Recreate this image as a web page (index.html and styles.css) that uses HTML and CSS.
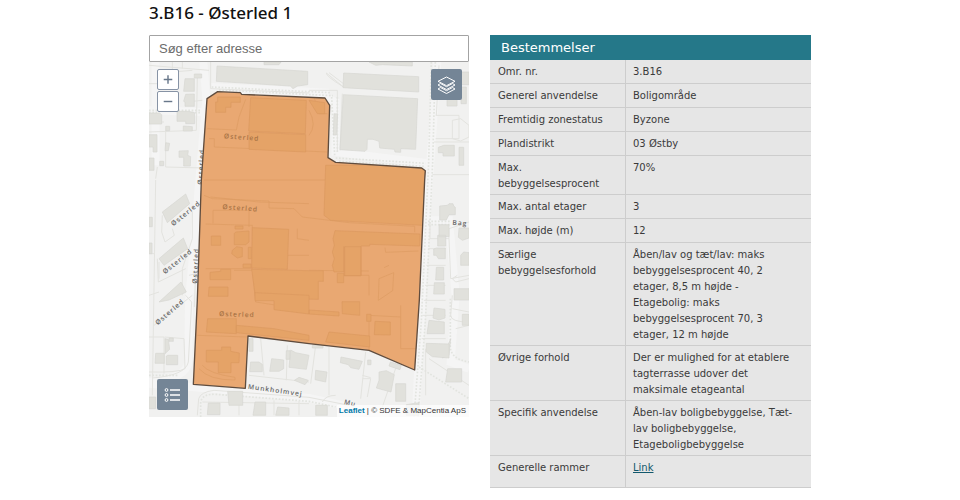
FILE: index.html
```html
<!DOCTYPE html>
<html lang="da">
<head>
<meta charset="utf-8">
<meta name="viewport" content="width=device-width, initial-scale=1">
<title>3.B16 - Østerled 1</title>
<link rel="stylesheet" href="styles.css">
</head>
<body>
<main class="page">
  <h1 class="title">3.B16 - Østerled 1</h1>
  <div class="columns">
    <section class="map-column">
      <input class="search" type="search" placeholder="Søg efter adresse" aria-label="Søg efter adresse">
      <div class="map">
        <svg class="map-canvas" viewBox="0 0 960 1065" role="img" aria-label="Kort over Østerled">
          <defs>
            <clipPath id="area"><path d="M174 110L206 89L274 92L278 97L528 108L542 130L537 287L560 301L818 318L829 326L827 354L811 714L797 924L660 865L480 845L297 822L289 979L133 967L145 714L157 354Z"/></clipPath>
          </defs>
          <rect width="960" height="1065" fill="#f1f1f0"/>

          <!-- roads -->
          <g class="road">
            <path d="M163 0L172 110L120 720L118 900Q112 950 0 960"/>
            <path d="M0 965L130 975L480 1008L720 1060"/>
            <path d="M480 90L560 120L560 270L850 305M865 0L830 500L800 1065"/>
            <path d="M185 75L540 92"/>
            <path d="M20 0L20 310M0 145L160 150M835 475H900L920 700L905 900L960 920"/>
          </g>

          <!-- hedges and tree rows -->
          <g class="trees">
            <path d="M188 75L544 92M210 84L552 101M548 105L557 280M565 105V270M560 288L830 304M570 298L828 313"/>
            <path d="M847 0L839 300L817 780L795 1065M859 0L851 300L829 780L807 1065"/>
            <path d="M0 145H24M88 145H158M0 152H24M88 152H158M837 478H905M837 488H905M0 940H90"/>
            <path d="M155 1065V1020Q160 995 200 997L480 1018L560 1035M810 915L960 1010M904 710V850Q902 890 960 900"/>
          </g>

          <!-- plot boundaries -->
          <g class="plot">
            <path d="M0 10L180 25M70 0V30L130 25M0 65H24M185 0V80L480 93M145 45L142 205L0 210M50 205V315L165 318M25 315L20 350M100 0V20M0 180H45M110 120L160 115"/>
            <path d="M532 33L582 74M540 32L590 70M532 33Q530 42 582 74M480 85H565V270M580 95L573 265M860 160H930V230H860M910 175L935 170L960 190V225L935 237L910 230ZM855 240H960M850 338H960M870 10L862 160"/>
            <path d="M40 460L38 510L48 540L76 520L70 500M25 590L28 660L110 620M30 600V650M20 354L10 1000M130 450V530L100 620V700M0 575H18M0 700L30 690M15 790L130 700M120 640L140 635L136 735"/>
            <path d="M843 480V530H900V500L960 480M838 560H890M832 610H890M828 670H890M900 530L905 650L960 640M925 640L910 650L920 660L960 650M825 715H890M820 760H890M818 830H890M950 30Q950 40 960 42"/>
            <path d="M0 825H45V935M47 825L105 830L108 920Q90 932 0 930M110 700L128 720L118 900Q110 940 10 948"/>
            <path d="M300 940L480 960M335 830L345 940M415 850L412 955M500 850L485 965M540 855V1000M650 870L635 1010M640 950H665L655 1005M750 890L700 1035M640 940L665 947M840 890L960 970M910 740L960 750M920 800L960 790M830 860V1000M910 700L905 760Q905 780 960 780"/>
            <path d="M145 1060L149 1010Q155 990 195 985L480 1006L600 1030M160 1020L480 1025M270 1010V1060M375 1015V1060M450 1018V1060M560 1000Q530 1000 520 1020"/>
          </g>

          <!-- buildings -->
          <g class="building">
            <path d="M204 12L476 28V68L446 72L432 80L424 72L202 58ZM345 0H396L390 8H345ZM660 0L680 10L700 8L790 12V0ZM584 33L809 44V90L582 77ZM583 98L806 110L800 262L755 260V271L738 270L736 262L692 258L690 238L672 232H655L654 262L648 268L573 263Z"/>
            <path d="M108 50H136V88H104ZM136 36H158V48H136ZM110 97L136 96V133H108V120L104 118ZM0 153H32L38 158V186H0ZM84 148H118L137 152V185H110V178H84ZM50 193H62V206H50ZM103 192L130 194V207H103ZM0 218H24V270H12V255H0ZM50 242L62 244L58 266H48ZM90 267L118 266L116 280L125 284L124 312H104V286H90ZM32 298H44V311H32ZM0 288H15V325H0Z"/>
            <path d="M894 98H924V132H894ZM868 256L884 250H916V282H882V272H868ZM930 256H944V310H930ZM555 155L566 156L562 219H553ZM930 30H960V68H930ZM936 75H952V125H936Z"/>
            <path d="M40 450L110 396L122 425L55 482ZM30 590L103 528L116 560L45 610ZM30 720L96 660L112 690L60 714ZM0 466H10V494H0ZM0 543H9V575H0Z"/>
            <path d="M872 432L895 430L900 425H912L914 432L919 436V458H900L892 474H872ZM870 488H900V524H870ZM866 520H890V552H866ZM854 561L862 558H889V590H868L862 580H854ZM862 616H884V654H860ZM856 662H886V696H854ZM930 498H960V528L940 535L928 526ZM935 580L944 570L960 572V610H935ZM915 680H960V714H915ZM905 830L900 880L880 888ZM940 757H960V790H940Z"/>
            <path d="M20 874H46V904H18ZM56 880H86V908H52V882ZM48 830L58 832L62 862L48 875ZM60 828H73V838H60ZM0 1005H20V1040H0ZM178 1023H213V1058H175ZM236 988H281V1030H240ZM318 1020H350V1060H312ZM386 1035L420 1038V1060H380Z"/>
            <path d="M305 900H330L340 907V929H302ZM368 890L404 894V920L390 928H362ZM412 866H423V892H411ZM425 864L440 872L480 880L472 922L420 916ZM300 830H312V868H300ZM436 955L450 946L478 955L468 968ZM576 885L640 898L630 922L605 917L598 908L574 902ZM500 925L534 930L530 960L498 953ZM690 930L712 926L736 938L726 990L682 978L690 955ZM740 965H770V1018H740ZM724 900L757 910L753 923L720 912ZM656 894H666V908H656ZM855 738L888 742V768L870 774L852 768ZM840 775L886 780V815H834ZM832 844L900 846V888L850 884L832 870ZM490 850H522V858H490ZM896 920H938V960H890ZM772 1028L810 1022V1060H772ZM500 1030H535V1060H500Z"/>
          </g>
          <g class="label">
            <text transform="translate(73 493) rotate(-39)">Østerled</text>
            <text transform="translate(48 637) rotate(-39)">Østerled</text>
            <text transform="translate(26 790) rotate(-41)">Østerled</text>
            <text transform="translate(910 488) rotate(4)">Bag</text>
            <text transform="translate(296 980) rotate(8)">Munkholmvej</text>
            <text transform="translate(584 1026) rotate(13)">Mu</text>
            <text transform="translate(144 665) rotate(-87)">Østerled</text>
            <text transform="translate(160 368) rotate(-87)">Østerled</text>
          </g>

          <!-- selected planning area -->
          <g clip-path="url(#area)">
            <rect width="960" height="1065" fill="#e9a872"/>
            <g class="area-light">
              <path d="M165 354L530 354M175 200L262 204L270 165L290 112M180 230H196V255L535 270M192 484V445H300V495M170 486L310 490V620H170M185 405L330 420L480 425"/>
              <path d="M165 400L190 410L360 417V438L435 440L460 465L600 482L797 493V511M445 500V530L480 535M415 580H480M480 145Q505 190 480 220M495 105L510 155H535M480 625L660 627M585 640H660V700M708 557L710 571L808 567M690 650L734 632L731 686L688 715ZM705 617L720 610"/>
              <path d="M255 625H310L320 720L450 740M160 910Q180 935 258 946V954Q180 955 150 920M145 820L295 825M430 700L445 735L480 735M660 760L755 765M755 730V860H810M660 760V865"/>
            </g>
            <g class="area-building">
              <path d="M305 107L472 115L469 215L299 207ZM206 105H274V121H246V136H230V151H200V120H206ZM300 210L470 218V270L300 262ZM480 115L527 122V155H505Z"/>
              <path d="M530 310H828L822 490L545 475L525 460Z"/>
              <path d="M310 497L419 502L415 622L308 618ZM187 522H215V550H187ZM260 510L300 507V540L290 548H256V515ZM258 492H282V501H258ZM250 565L263 554L280 557V584L265 588L248 575ZM282 606H306V617H282ZM183 631L215 628V622H245V653H183ZM180 675H237V703H178ZM298 556H307V590H298Z"/>
              <path d="M558 506L813 516L812 552L662 547V552H636V641H585V554V629L555 630L550 610L556 590L550 570L556 550L552 530ZM587 554H636V641H587ZM308 622L480 626H523V658H508V712L320 708ZM565 634H584V662H565Z"/>
              <path d="M318 692L480 700V756L375 743V716H318ZM176 770H262V815L172 810ZM172 865H218V855H245V868L271 873L270 902H246V932H208V900H172ZM262 790L375 800L480 820V835L262 812ZM579 719H632V760L580 755ZM480 744L570 750V762L480 756ZM678 778L724 780V819L676 818ZM540 810L662 822V855L530 840ZM653 757H666V778H653Z"/>
            </g>
            <g class="area-label">
              <text transform="translate(224 229) rotate(4)">Østerled</text>
              <text transform="translate(220 441) rotate(4)">Østerled</text>
              <text transform="translate(210 762) rotate(2)">Østerled</text>
            </g>
          </g>
          <path class="outline" d="M174 110L206 89L274 92L278 97L528 108L542 130L537 287L560 301L818 318L829 326L827 354L811 714L797 924L660 865L480 845L297 822L289 979L133 967L145 714L157 354Z"/>
        </svg>
        <div class="zoom">
          <button class="zoom-button" type="button" aria-label="Zoom ind"><svg viewBox="0 0 20 20"><path d="M5.500 10H14.500M10 5.500V14.500"/></svg></button>
          <button class="zoom-button" type="button" aria-label="Zoom ud"><svg viewBox="0 0 20 20"><path d="M5.500 10H14.500"/></svg></button>
        </div>
        <button class="tool tool-layers" type="button" aria-label="Kortlag">
          <svg viewBox="0 0 31 31"><path class="sheet" d="M7 20L15.500 24.500L24 20L21.500 18.500L15.500 21.700L9.500 18.500Z"/><path class="sheet" d="M7 16L15.500 20.500L24 16L21.500 14.500L15.500 17.700L9.500 14.500Z"/><path class="sheet" d="M15.500 8L24 12.300L15.500 16.700L7 12.300Z"/></svg>
        </button>
        <button class="tool tool-legend" type="button" aria-label="Signaturforklaring">
          <svg viewBox="0 0 31 31"><path class="rows" d="M13 11H23M13 16H23M13 21H23"/><g class="dots"><circle cx="9.500" cy="11" r="1.400"/><circle cx="9.500" cy="16" r="1.400"/><circle cx="9.500" cy="21" r="1.400"/></g></svg>
        </button>
        <div class="attribution"><a href="#">Leaflet</a> | © SDFE &amp; MapCentia ApS</div>
      </div>
    </section>

    <section class="rules">
      <h2 class="rules-title" id="rules-title">Bestemmelser</h2>
      <table class="rules-table" aria-labelledby="rules-title">
        <tbody>
          <tr><th scope="row">Omr. nr.</th><td>3.B16</td></tr>
          <tr><th scope="row">Generel anvendelse</th><td>Boligområde</td></tr>
          <tr><th scope="row">Fremtidig zonestatus</th><td>Byzone</td></tr>
          <tr><th scope="row">Plandistrikt</th><td>03 Østby</td></tr>
          <tr class="long"><th scope="row">Max. bebyggelsesprocent</th><td>70%</td></tr>
          <tr><th scope="row">Max. antal etager</th><td>3</td></tr>
          <tr><th scope="row">Max. højde (m)</th><td>12</td></tr>
          <tr class="long"><th scope="row">Særlige bebyggelsesforhold</th><td>Åben/lav og tæt/lav: maks bebyggelsesprocent 40, 2 etager, 8,5 m højde - Etagebolig: maks bebyggelsesprocent 70, 3 etager, 12 m højde</td></tr>
          <tr class="long"><th scope="row">Øvrige forhold</th><td>Der er mulighed for at etablere tagterrasse udover det maksimale etageantal</td></tr>
          <tr class="long"><th scope="row">Specifik anvendelse</th><td>Åben-lav boligbebyggelse, Tæt-lav boligbebyggelse, Etageboligbebyggelse</td></tr>
          <tr class="last"><th scope="row">Generelle rammer</th><td><a href="#">Link</a></td></tr>
        </tbody>
      </table>
    </section>
  </div>
</main>
</body>
</html>
```
FILE: styles.css
```css
* { box-sizing: border-box; }

body {
  margin: 0;
  background: #fff;
  color: #3a3a3a;
  font-family: Verdana, "DejaVu Sans", sans-serif;
  font-size: 10px;
  line-height: 16px;
}

.page {
  max-width: 662px;
  margin: 0 auto;
  padding-top: 3px;
}

.title {
  margin: 0 0 12px;
  color: #111;
  font: 500 17px/20px "Trebuchet MS", "Noto Sans", sans-serif;
}

.columns {
  display: grid;
  grid-template-columns: 320fr 321fr;
  gap: 21px;
  align-items: start;
}

.search {
  display: block;
  width: 100%;
  height: 27px;
  padding: 0 9px;
  border: 1px solid #a3a3a3;
  border-radius: 1px;
  background: #fff;
  appearance: none;
  font: 13px/16px Arial, "Liberation Sans", sans-serif;
}
.search::placeholder { color: #6c6c6c; opacity: 1; }

.map { position: relative; overflow: hidden; }
.map-canvas { display: block; width: 100%; height: auto; }

.road { fill: none; stroke: #f5f5f5; stroke-width: 24; }
.trees { fill: none; stroke: #e2e4df; stroke-width: 5; stroke-dasharray: 5 5; }
.plot { fill: none; stroke: #e3e3df; stroke-width: 3; }
.building { fill: #e1e1dc; stroke: #d7d7d2; stroke-width: 2; }
.area-light { fill: none; stroke: #dc9b62; stroke-width: 2; }
.area-building { fill: #e5a367; stroke: #db995f; stroke-width: 2; }
.outline { fill: none; stroke: #5f4c3e; stroke-width: 4; stroke-linejoin: round; }
.label, .area-label {
  fill: #666;
  font: 600 20px "Open Sans", sans-serif;
  letter-spacing: 3px;
}
.area-label { fill: #a87345; }

.zoom {
  position: absolute;
  top: 7px;
  left: 8px;
  display: grid;
  gap: 1px;
}
.zoom-button {
  width: 22px;
  height: 21px;
  padding: 0;
  border: 1px solid #8793a5;
  border-radius: 2px;
  background: #fff;
}
.zoom-button svg { display: block; width: 100%; height: 100%; fill: none; stroke: #68778a; stroke-width: 1.500; }

.tool {
  position: absolute;
  width: 31px;
  height: 31px;
  padding: 0;
  border: 0;
  border-radius: 2px;
  background: #748596;
}
.tool svg { display: block; width: 100%; height: 100%; }
.tool-layers { top: 7px; right: 7px; }
.tool-legend { bottom: 7px; left: 8px; }
.sheet { fill: #748596; stroke: #fff; stroke-width: 1; stroke-linejoin: round; }
.rows { fill: none; stroke: #fff; stroke-width: 1.500; }
.dots { fill: none; stroke: #fff; stroke-width: 1; }

.attribution {
  position: absolute;
  right: 0;
  bottom: 0;
  padding: 0 3px 0 2px;
  background: rgba(255, 255, 255, 0.7);
  color: #333;
  font: 8px/12px Arial, "Liberation Sans", sans-serif;
}
.attribution a { color: #0078a8; font-weight: bold; text-decoration: none; }

.rules-title {
  margin: 0;
  padding: 0 11px;
  background: #257889;
  color: #fff;
  font-size: 13px;
  font-weight: 400;
  line-height: 25px;
}

.rules-table {
  width: 100%;
  border-collapse: separate;
  border-spacing: 0;
  table-layout: fixed;
  background: #e6e6e6;
}
.rules-table th,
.rules-table td {
  padding: 4px 8px 3px;
  border-bottom: 1px solid #cdcdcd;
  text-align: left;
  vertical-align: top;
  font-weight: 400;
}
.rules-table th { width: 136px; border-right: 1px solid #cdcdcd; }
.rules-table td { padding-right: 16px; padding-left: 7px; }
.rules-table .long th,
.rules-table .long td { padding-bottom: 2px; }
.rules-table .last th,
.rules-table .last td { padding-bottom: 11px; }
.rules-table a { color: #12586c; }
```
